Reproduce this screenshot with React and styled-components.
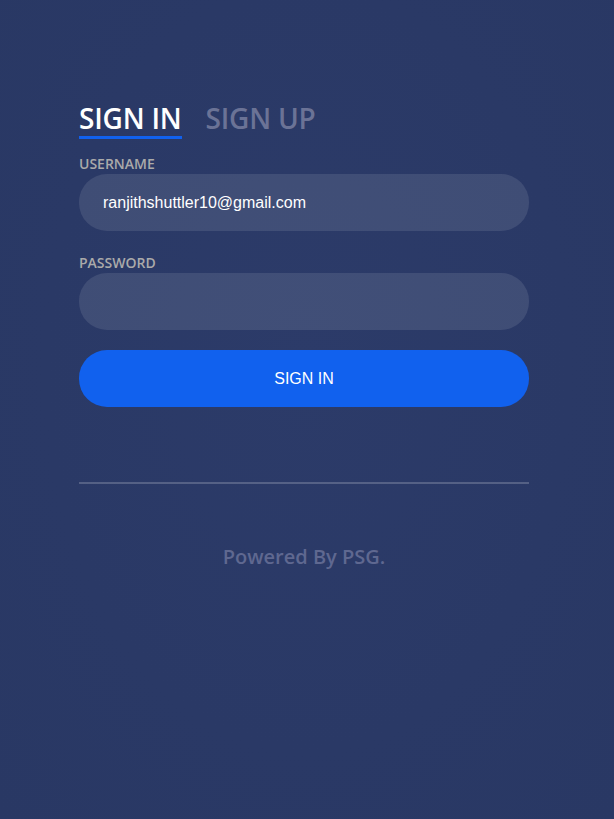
import React from 'react';
import styled, { createGlobalStyle } from 'styled-components';

const GlobalStyle = createGlobalStyle`
  html, body {
    margin: 0;
    padding: 0;
    background: #2b3a67;
  }
  body {
    font-family: 'Open Sans', 'Liberation Sans', sans-serif;
  }
`;

const Page = styled.div`
  min-height: 819px;
  background: radial-gradient(ellipse at 50% 45%, #2c3b69 0%, #2a3966 60%, #293864 100%);
  padding-left: 79px;
  box-sizing: border-box;
`;

const LoginBlock = styled.div`
  width: 450px;
  padding-top: 101px;
`;

const Tabs = styled.div`
  display: flex;
  gap: 24px;
  margin-bottom: 16px;
`;

const Tab = styled.div`
  font-size: 28px;
  font-weight: 600;
  line-height: 34px;
  padding-bottom: 1px;
  letter-spacing: -0.2px;
  color: ${(p) => (p.active ? '#ffffff' : '#6b7396')};
  border-bottom: 3px solid ${(p) => (p.active ? '#1161ee' : 'transparent')};
  cursor: pointer;
`;

const Group = styled.div`
  & + & {
    margin-top: 23px;
  }
`;

const Label = styled.label`
  display: block;
  font-size: 14px;
  font-weight: 600;
  line-height: 18px;
  color: #aaaaaa;
  margin-bottom: 1px;
`;

const Input = styled.input`
  display: block;
  box-sizing: border-box;
  width: 100%;
  height: 57px;
  border: none;
  outline: none;
  border-radius: 28px;
  padding: 0 24px;
  background: rgba(255, 255, 255, 0.1);
  color: #fff;
  font-family: 'Liberation Sans', Arial, sans-serif;
  font-size: 16px;
`;

const Button = styled.button`
  display: block;
  width: 100%;
  height: 57px;
  margin-top: 20px;
  border: none;
  border-radius: 28px;
  background: #1161ee;
  color: #fff;
  font-family: 'Liberation Sans', Arial, sans-serif;
  font-size: 16px;
  cursor: pointer;
`;

const Divider = styled.div`
  height: 2px;
  margin-top: 75px;
  background: rgba(255, 255, 255, 0.2);
`;

const Footer = styled.div`
  margin-top: 60px;
  text-align: center;
  font-size: 20px;
  font-weight: 600;
  line-height: 26px;
  color: #5f6890;
`;

const App = () => {
  return (
    <>
      <GlobalStyle />
      <Page>
        <LoginBlock>
          <Tabs>
            <Tab active>SIGN IN</Tab>
            <Tab>SIGN UP</Tab>
          </Tabs>
          <form onSubmit={(e) => e.preventDefault()}>
            <Group>
              <Label htmlFor="user">USERNAME</Label>
              <Input id="user" type="text" defaultValue="ranjithshuttler10@gmail.com" />
            </Group>
            <Group>
              <Label htmlFor="pass">PASSWORD</Label>
              <Input id="pass" type="password" />
            </Group>
            <Button type="submit">SIGN IN</Button>
          </form>
          <Divider />
          <Footer>Powered By PSG.</Footer>
        </LoginBlock>
      </Page>
    </>
  );
};

export default App;
